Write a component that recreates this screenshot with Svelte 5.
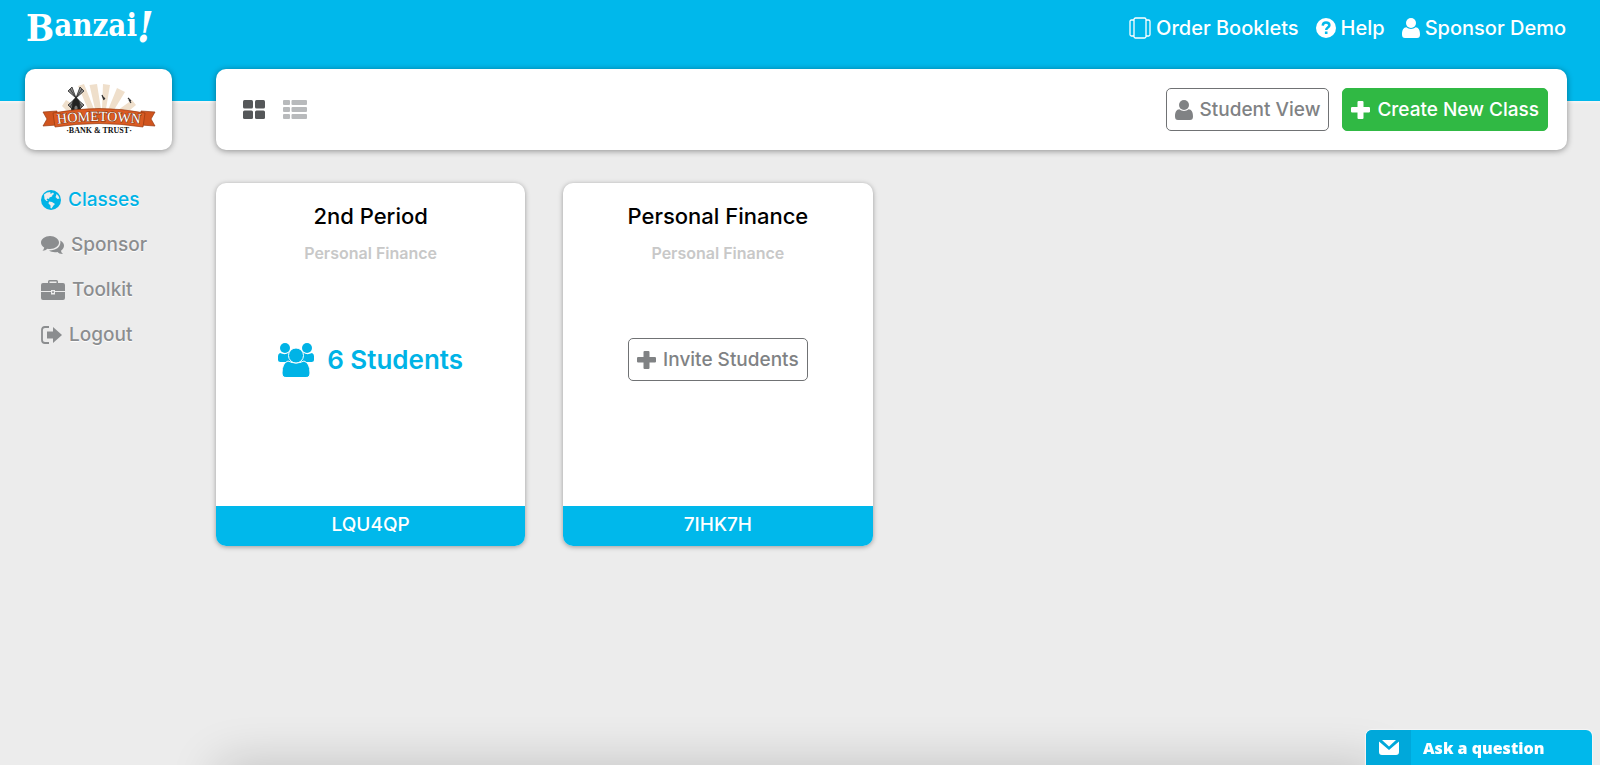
<script lang="ts">
  type Klass = { name: string; course: string; code: string; students: number };

  const classes: Klass[] = [
    { name: '2nd Period', course: 'Personal Finance', code: 'LQU4QP', students: 6 },
    { name: 'Personal Finance', course: 'Personal Finance', code: '7IHK7H', students: 0 }
  ];
</script>

{#snippet person()}
  <svg width="18" height="20" viewBox="0 0 18 20" fill="currentColor" aria-hidden="true">
    <circle cx="9" cy="5" r="5" />
    <path d="M0 16.500C0 12 1.500 9.600 4.400 9.300 7 11.500 11 11.500 13.600 9.300 16.500 9.600 18 12 18 16.500 18 19 17 20 15 20H3C1 20 0 19 0 16.500Z" />
  </svg>
{/snippet}

{#snippet plus()}
  <svg width="19" height="18" viewBox="0 0 19 18" fill="currentColor" aria-hidden="true">
    <path d="M7.600 0H11.400Q12.500 0 12.500 1.100V6H17.900Q19 6 19 7.100V10.400Q19 11.500 17.900 11.500H12.500V16.900Q12.500 18 11.400 18H7.600Q6.500 18 6.500 16.900V11.500H1.100Q0 11.500 0 10.400V7.100Q0 6 1.100 6H6.500V1.100Q6.500 0 7.600 0Z" />
  </svg>
{/snippet}

<div class="page">
  <header class="top">
    <a class="brand" href="#home" aria-label="Banzai!"><span class="big">B</span><span class="rest">anzai</span><span class="bang">!</span></a>
    <nav class="account">
      <a href="#booklets">
        <svg width="22" height="22" viewBox="0 0 22 22" fill="none" stroke="currentColor" stroke-width="1.300" aria-hidden="true">
          <rect x="5" y="1" width="12" height="20" rx="1.500" />
          <path d="M5 3H2.500Q1 3 1 4.500V17.500Q1 19 2.500 19H5M17 3H19.500Q21 3 21 4.500V17.500Q21 19 19.500 19H17" />
        </svg>
        Order Booklets
      </a>
      <a href="#help">
        <svg width="20" height="20" viewBox="0 0 20 20" aria-hidden="true">
          <circle cx="10" cy="10" r="10" fill="currentColor" />
          <path d="M6.700 7.600C6.900 5.300 8.200 4.400 10 4.400 12 4.400 13.400 5.500 13.400 7.200 13.400 9.600 10.200 9.500 10.200 12.100" fill="none" stroke="#00b8eb" stroke-width="2.500" />
          <rect x="8.900" y="13.500" width="2.600" height="2.500" fill="#00b8eb" />
        </svg>
        Help
      </a>
      <a href="#account">{@render person()}Sponsor Demo</a>
    </nav>
  </header>

  <div class="body">
    <aside>
      <a class="sponsor-logo panel" href="#sponsor-home" aria-label="Hometown Bank &amp; Trust">
        <svg width="114" height="52" viewBox="0 0 114 52" aria-hidden="true">
          <g fill="#efdfcb">
            <path d="M47.500 1 55 0 59 25H53Z" />
            <path d="M61 0 68 1 64 25H60Z" />
            <path d="M75 4 83 8 72 26H66Z" />
            <path d="M90 16 94 21 88 26H76Z" />
            <path d="M36 2 42 0 52 25H46Z" />
            <path d="M24 16 20 22 24 26H40Z" />
          </g>
          <g stroke="#292929" stroke-width=".8" fill="#8d8d8d">
            <path d="M34 14 26 7 30 3ZM34 14 38 3 42 7ZM34 14 30 25 26 21ZM34 14 42 21 38 25Z" />
            <path d="M34 14 28 5M34 14 40 5M34 14 28 23M34 14 40 23" fill="none" />
            <path d="M31 17Q34 11 37 17L39 29H29Z" fill="#222" />
          </g>
          <path d="M32.500 27V23Q34 20 35.500 23V27Z" fill="#777" />
          <path d="M60 11 62 16M61 13 63 15M86 14 89 17M87 16 89 19" stroke="#333" stroke-width="1.200" />
          <path d="M1 28 15 27V41L1 42 5 35ZM113 28 99 27V41L113 42 109 35Z" fill="#d0541e" stroke="#963b13" stroke-width=".7" />
          <path d="M11 29Q57 20 103 29L101 43Q57 36 13 43Z" fill="#db5b22" stroke="#963b13" stroke-width=".7" />
          <path id="banner-line" d="M14 40Q57 34 100 40" fill="none" />
          <text class="banner" text-anchor="middle"><textPath href="#banner-line" startOffset="50%">HOMETOWN</textPath></text>
          <text class="subline" x="57" y="49" text-anchor="middle">·BANK &amp; TRUST·</text>
        </svg>
      </a>
      <nav class="side">
        <a class="active" href="#classes">
          <svg width="20" height="20" viewBox="0 0 20 20" aria-hidden="true">
            <circle cx="10" cy="10" r="10" fill="currentColor" />
            <path d="M3 4.500 6 2.500 9.500 2 9 3.500 10.500 3.500 12 2.500 13 4 11.500 5 11 6.500 8.500 7.500 8 9 6.500 8.500 5.500 9.500 7 11 5.500 11 3.500 9Z" fill="#ececec" />
            <path d="M8 11.500 11 12 14 14 12.500 15.500 10.500 18.500 9.500 18 9.500 15.500 7.500 13.500Z" fill="#ececec" />
            <path d="M15.500 4 17.500 6 18.500 8.500 16.500 9 14.500 7 15 6Z" fill="#ececec" />
          </svg>
          Classes
        </a>
        <a href="#sponsor">
          <svg width="23" height="20" viewBox="0 0 23 20" fill="currentColor" aria-hidden="true">
            <path d="M9 1C14 1 18 4 18 7.500S14 14 9 14Q7.500 14 6.500 13.700 4.500 15.500 1.500 15.700 3 14.500 3.200 12.500 0 10.700 0 7.500C0 4 4 1 9 1Z" />
            <path d="M19.300 5.500C22 7 23 8.700 23 10.600 23 12.500 22 14.500 20 15.700 20.200 17.500 21.700 18.500 22 19 19 19 17.500 18 16.500 17 13 17.500 10 17 8 15.500 14.500 15.700 20.500 12 19.300 5.500Z" />
          </svg>
          Sponsor
        </a>
        <a href="#toolkit">
          <svg width="24" height="20" viewBox="0 0 24 20" fill="currentColor" aria-hidden="true">
            <path d="M7 3V1.500Q7 0 8.500 0H15.500Q17 0 17 1.500V3H22Q24 3 24 5V11H14V10H10V11H0V5Q0 3 2 3ZM8.500 3H15.500V1.500H8.500Z" fill-rule="evenodd" />
            <path d="M0 12H10V14.500H14V12H24V18Q24 20 22 20H2Q0 20 0 18ZM11.200 11.200H12.800V13H11.200Z" />
          </svg>
          Toolkit
        </a>
        <a href="#logout">
          <svg width="21" height="20" viewBox="0 0 21 20" aria-hidden="true">
            <path d="M8 2H4Q1 2 1 5V15Q1 18 4 18H8" fill="none" stroke="currentColor" stroke-width="1.800" />
            <path d="M6 6.500H12V2L21 10 12 18V13.500H6Z" fill="currentColor" />
          </svg>
          Logout
        </a>
      </nav>
    </aside>

    <main>
      <div class="toolbar panel">
        <button class="view on" aria-label="Grid view">
          <svg width="22" height="19" viewBox="0 0 22 19" fill="currentColor" aria-hidden="true">
            <rect width="10" height="8.500" rx="1.500" /><rect x="12" width="10" height="8.500" rx="1.500" />
            <rect y="10.500" width="10" height="8.500" rx="1.500" /><rect x="12" y="10.500" width="10" height="8.500" rx="1.500" />
          </svg>
        </button>
        <button class="view" aria-label="List view">
          <svg width="24" height="19" viewBox="0 0 24 19" fill="currentColor" aria-hidden="true">
            {#each [0, 7, 14] as y}
              <rect {y} width="7" height="5" rx="1" /><rect x="8.500" {y} width="15.500" height="5" rx="1" />
            {/each}
          </svg>
        </button>
        <div class="actions">
          <button class="outline">{@render person()}Student View</button>
          <button class="create">{@render plus()}Create New Class</button>
        </div>
      </div>

      <div class="cards">
        {#each classes as k}
          <article class="card">
            <h2>{k.name}</h2>
            <p class="course">{k.course}</p>
            <div class="middle">
              {#if k.students}
                <a class="count" href="#students">
                  <svg width="36" height="34" viewBox="0 0 36 34" fill="currentColor" stroke="#fff" aria-hidden="true">
                    <g stroke="none">
                      <circle cx="7" cy="5" r="5" /><circle cx="29" cy="5" r="5" />
                      <path d="M2 10Q7 12.500 11 9.500L16 18 12 19H2.500Q0 19 0 16.500V13Q0 11 2 10ZM34 10Q29 12.500 25 9.500L20 18 24 19H33.500Q36 19 36 16.500V13Q36 11 34 10Z" />
                    </g>
                    <path d="M10 18Q18 22 26 18 32 20 32 30 32 34.500 28 34.500H8Q4 34.500 4 30 4 20 10 18Z" />
                    <circle cx="18" cy="12.500" r="7.500" />
                  </svg>
                  {k.students} Students
                </a>
              {:else}
                <button class="outline">{@render plus()}Invite Students</button>
              {/if}
            </div>
            <footer>{k.code}</footer>
          </article>
        {/each}
      </div>
    </main>
  </div>

  <div class="drawer-shadow"></div>
  <button class="ask">
    <span class="mail">
      <svg width="20" height="15" viewBox="0 0 20 15" fill="#fff" aria-hidden="true">
        <path d="M3 0H17L10 6.500Z" /><path d="M0 1.500 10 10 20 1.500V12Q20 15 17 15H3Q0 15 0 12Z" />
      </svg>
    </span>
    <span class="label">Ask a question</span>
  </button>
</div>

<style>
  :global(body) {
    margin: 0;
    background: #ececec;
  }
  .page {
    position: relative;
    min-height: 100vh;
    overflow: hidden;
    font: 500 19px/24px Inter, "Open Sans", sans-serif;
    color: #8b8d8f;
    background: linear-gradient(#00b8eb 101px, #f6f6f6 101px, #ececec 104px);
  }
  a {
    color: inherit;
    text-decoration: none;
  }
  button {
    font: inherit;
    color: inherit;
    border: 0;
    padding: 0;
    background: none;
    cursor: pointer;
  }
  svg {
    display: block;
    flex: none;
  }
  .top {
    display: flex;
    justify-content: space-between;
    align-items: center;
    height: 56px;
    margin-bottom: 13px;
    padding: 0 34px 0 26px;
    color: #fff;
  }
  .brand {
    display: flex;
    align-items: center;
    font: bold 37px/40px "DejaVu Serif Condensed", "Liberation Serif", serif;
  }
  .rest {
    padding-bottom: 7px;
    font-size: 31px;
  }
  .bang {
    font-size: 42px;
    font-style: italic;
  }
  .account,
  .account a {
    display: flex;
    align-items: center;
  }
  .account {
    gap: 17px;
    font-size: 20px;
  }
  .account a {
    gap: 5px;
  }
  .body {
    display: flex;
    gap: 44px;
    padding: 0 33px 0 25px;
  }
  aside {
    flex: none;
    width: 147px;
  }
  main {
    flex: 1;
  }
  .panel {
    display: flex;
    align-items: center;
    box-sizing: border-box;
    height: 81px;
    border-radius: 10px;
    background: #fff;
    box-shadow: 0 1px 6px rgba(0, 0, 0, 0.4);
  }
  .sponsor-logo {
    justify-content: center;
  }
  .banner {
    font: 14px "Liberation Serif", serif;
    fill: #fff;
    stroke: #7d3312;
    stroke-width: 1px;
    paint-order: stroke;
  }
  .subline {
    font: bold 8px "Liberation Serif", serif;
    fill: #111;
  }
  .side {
    display: flex;
    flex-direction: column;
    gap: 21px;
    padding: 38px 0 0 16px;
    text-shadow: 0 1px 1px #fff;
  }
  .side a {
    display: flex;
    align-items: center;
    gap: 7px;
  }
  .side .active {
    color: #00b3e6;
  }
  .toolbar {
    gap: 18px;
    padding: 0 19px 0 27px;
  }
  .view {
    color: #b8babc;
  }
  .view.on {
    color: #555759;
  }
  .actions {
    display: flex;
    gap: 13px;
    margin-left: auto;
  }
  .outline,
  .create {
    display: flex;
    align-items: center;
    gap: 7px;
    box-sizing: border-box;
    height: 43px;
    padding: 0 8px;
    border: 1px solid #707274;
    border-radius: 5px;
    color: #808284;
  }
  .create {
    border-color: #30b944;
    color: #fff;
    background: #30b944;
  }
  .cards {
    display: grid;
    grid-template-columns: repeat(auto-fill, minmax(300px, 1fr));
    gap: 38px;
    margin-top: 33px;
  }
  .card {
    display: flex;
    flex-direction: column;
    min-height: 363px;
    border-radius: 10px;
    overflow: hidden;
    text-align: center;
    background: #fff;
    box-shadow: 0 1px 5px rgba(0, 0, 0, 0.35);
  }
  h2 {
    margin: 20px 0 0;
    font: 500 22px/26px Inter, sans-serif;
    color: #000;
  }
  .course {
    margin: 12px 0 0;
    font-weight: 600;
    font-size: 16px;
    color: #c8c8c8;
  }
  .middle {
    display: flex;
    flex: 1;
    align-items: center;
    justify-content: center;
    padding-bottom: 52px;
  }
  .count {
    display: flex;
    align-items: center;
    gap: 13px;
    font: 600 26px/34px Inter, sans-serif;
    color: #00b3e6;
  }
  .card footer {
    padding: 7px 0 9px;
    color: #fff;
    background: #00b8eb;
  }
  .drawer-shadow {
    position: fixed;
    top: 100%;
    left: 218px;
    right: 218px;
    height: 40px;
    box-shadow: 0 0 50px rgba(0, 0, 0, 0.2);
  }
  .ask {
    position: fixed;
    right: 8px;
    bottom: 0;
    display: flex;
    width: 226px;
    height: 35px;
    border-radius: 6px 6px 0 0;
    overflow: hidden;
    color: #fff;
    background: #00b8eb;
    box-shadow: 0 0 1px 1px #f6f6f6;
  }
  .mail {
    display: flex;
    align-items: center;
    justify-content: center;
    width: 45px;
    height: 100%;
    background: #00a8da;
  }
  .label {
    padding: 6px 0 0 12px;
    font: 800 16px/24px "Open Sans", sans-serif;
  }
</style>
